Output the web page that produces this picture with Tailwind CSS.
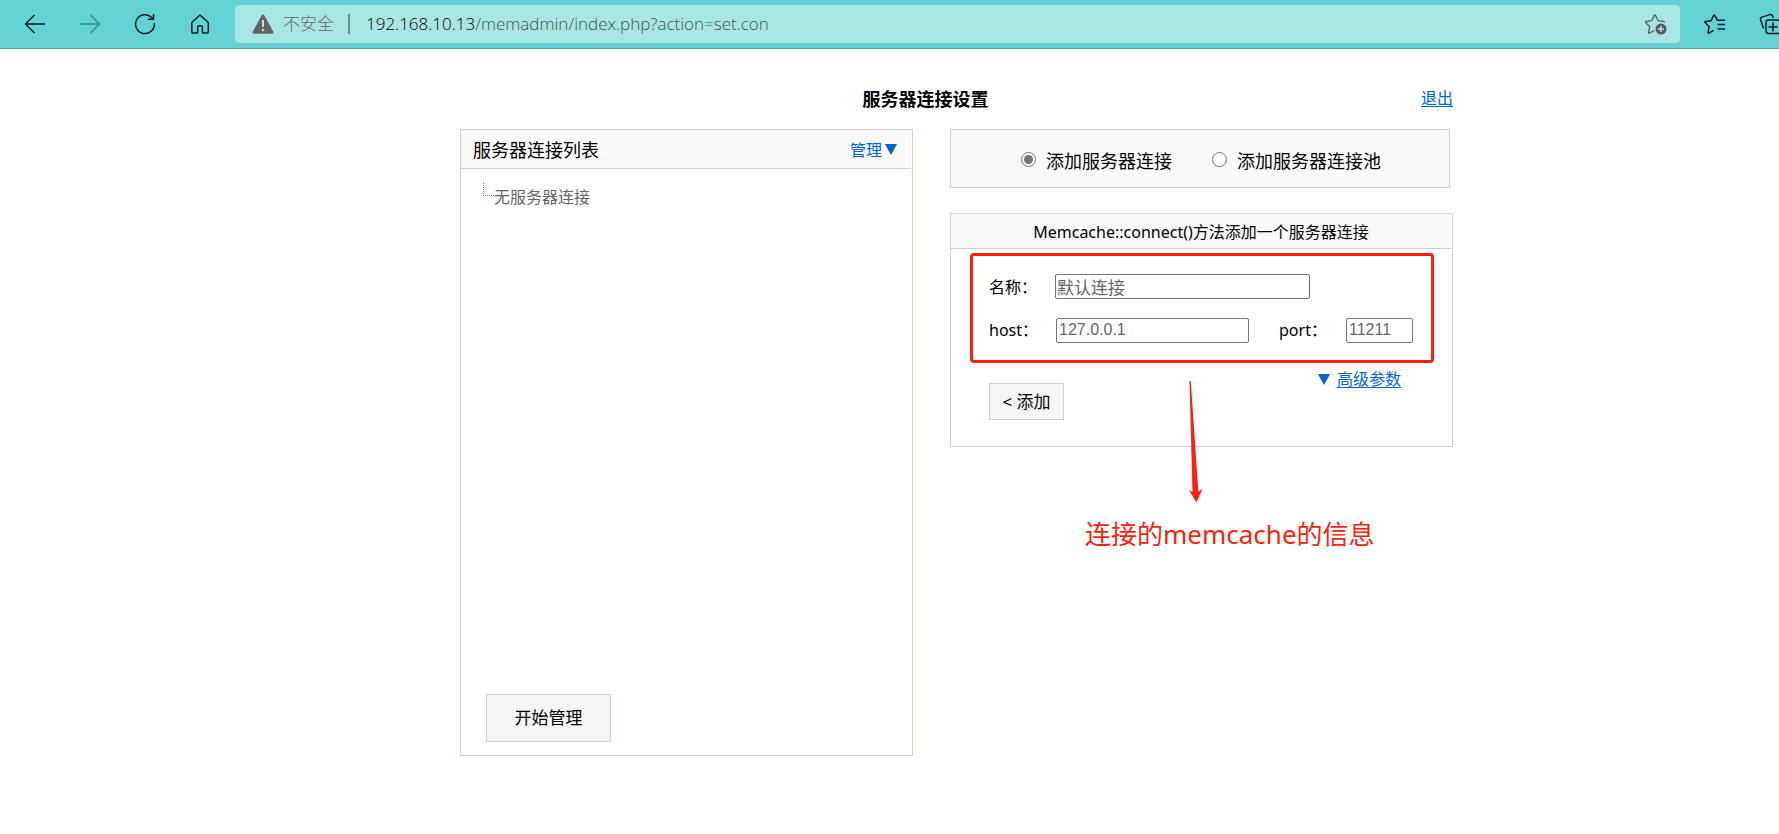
<!DOCTYPE html>
<html lang="zh-CN">
<head>
<meta charset="utf-8">
<meta name="viewport" content="width=device-width, initial-scale=1">
<title>服务器连接设置</title>
<script src="https://cdn.jsdelivr.net/npm/@tailwindcss/browser@4"></script>
</head>
<body class="bg-white text-black font-['Noto_Sans','Noto_Sans_CJK_SC',sans-serif] text-[16px] leading-6 overflow-x-hidden min-h-screen">

<!-- Browser toolbar -->
<header class="flex items-center h-[49px] pb-px bg-[#62d2d2] border-b border-[#4fa5a5] overflow-hidden">
  <nav class="flex shrink-0 items-center gap-[31px] pl-[23px]" aria-label="浏览器导航">
    <button class="size-6" aria-label="后退"><svg class="size-6" viewBox="0 0 24 24" fill="none" stroke="#0b1c1c" stroke-width="1.5"><path d="M22 12H2.500M11.500 3L2.500 12l9 9"/></svg></button>
    <button class="size-6" aria-label="前进"><svg class="size-6" viewBox="0 0 24 24" fill="none" stroke="#3f8a8a" stroke-width="1.5"><path d="M2 12h19.500M12.500 3l9 9-9 9"/></svg></button>
    <button class="size-6" aria-label="刷新"><svg class="size-6" viewBox="0 0 24 24" fill="none" stroke="#0b1c1c" stroke-width="1.500"><path d="M21.300 11a9.400 9.400 0 1 1-2.600-5.400l1.300 1.400M20.500 2v5.300h-5.600"/></svg></button>
    <button class="size-6" aria-label="主页"><svg class="size-6" viewBox="0 0 24 24" fill="none" stroke="#0b1c1c" stroke-width="1.500" stroke-linejoin="round"><path d="M3.800 10.500L12 3l8.300 7.500v9.200c0 .8-.5 1.300-1.300 1.300h-3.500c-.7 0-1.100-.4-1.100-1.100v-5c0-.8-.4-1.200-1.100-1.200h-2.500c-.7 0-1.100.4-1.100 1.200v5c0 .7-.4 1.100-1.100 1.100H5.100c-.8 0-1.300-.5-1.300-1.300z"/></svg></button>
  </nav>
  <div class="ml-[23px] flex h-[38px] min-w-0 flex-1 items-center rounded bg-[#a8e6e4] pl-4 pr-3">
    <button class="flex shrink-0 items-center text-[17px] font-light text-[#5f6b6b]">
      <svg class="mr-2 size-6" viewBox="0 0 24 24"><path d="M12 2.500c.6 0 1 .3 1.300.8l9 16.500c.5 1-.1 1.900-1.200 1.900H2.900c-1.100 0-1.700-.9-1.200-1.900l9-16.500c.3-.5.700-.8 1.300-.8z" fill="#646464"/><path d="M12 8v7" stroke="#b9e8e6" stroke-width="2"/><circle cx="12" cy="18" r="1.300" fill="#b9e8e6"/></svg>
      不安全
    </button>
    <span class="ml-[14px] mr-4 h-5 w-[2px] shrink-0 bg-[#5f8f8f]"></span>
    <div role="textbox" aria-label="地址栏" contenteditable="true" spellcheck="false" class="min-w-0 flex-1 whitespace-nowrap font-['Open_Sans',sans-serif] text-[17px] font-light text-[#405555]"><span class="text-black">192.168.10.13</span>/memadmin/index.php?action=set.con</div>
    <button class="size-6 shrink-0" aria-label="添加到收藏夹"><svg class="size-6" viewBox="0 0 24 24" fill="none"><path d="M10.500 18.500l-5 2.700c-.6.300-1-.1-.9-.7l1.100-5.800-4-4.100c-.5-.5-.3-1 .4-1.100l5.500-.8 2.700-5.300c.3-.6.8-.6 1.100 0l2.700 5.300 5.600.8c.6.100.8.5.6.9" stroke="#646464" stroke-width="1.400"/><circle cx="17" cy="17" r="5.500" fill="#5a5a5a"/><path d="M17 14v6M14 17h6" stroke="#b9e8e6" stroke-width="1.500"/></svg></button>
  </div>
  <div class="flex w-[99px] shrink-0 items-center gap-[31px] pl-[23px]">
    <button class="size-6 shrink-0" aria-label="收藏夹"><svg class="size-6" viewBox="0 0 24 24" fill="none" stroke="#0b1c1c" stroke-width="1.500"><path d="M10.500 18.500l-4.600 2.700c-.6.300-1-.1-.9-.7l1.100-5.800-4-4.100c-.5-.5-.3-1 .4-1.100l5.500-.8 2.700-5.300c.3-.6.8-.6 1.100 0L14.300 8.200h7.700M14.500 12.500H22M14.500 17H22"/></svg></button>
    <button class="size-6 shrink-0" aria-label="集锦"><svg class="size-6" viewBox="0 0 24 24" fill="none" stroke="#0b1c1c" stroke-width="1.500"><rect x="8" y="8" width="14" height="13.500" rx="2.500"/><path d="M15 10.500v9M10.500 15h9M5.500 16.500L2.600 7.800c-.4-1.300.1-2.300 1.300-2.700l8-2.500c1.300-.3 2.300.2 2.700 1.400l.6 1.700"/></svg></button>
  </div>
</header>

<div class="grid grid-cols-[460fr_minmax(0,993px)_326fr]">
<main class="col-start-2 pt-9">
  <div class="flex items-center">
    <h1 class="flex-1 text-center text-[18px] font-bold leading-7">服务器连接设置</h1>
    <a href="#logout" class="mb-0.5 ml-[30px] text-[#0066cc] underline underline-offset-2">退出</a>
  </div>

  <div class="mt-4 grid grid-cols-[453fr_503fr] items-start gap-[37px]">

    <!-- Connection list -->
    <section class="flex min-h-[627px] flex-col border border-[#d3d3c1]">
      <div class="mr-px flex h-[39px] items-center justify-between border-b border-[#d3d3c1] bg-[#fafafa] pl-3 pr-[14px] pt-px">
        <h2 class="text-[18px]">服务器连接列表</h2>
        <button class="flex items-center text-[#0066cc]">管理<svg class="ml-[3px] h-[11px] w-[12px]" viewBox="0 0 12 11"><path d="M0 0h12L6 11z" fill="#0066cc"/></svg></button>
      </div>
      <div class="flex items-start pl-[22px] pt-[14px] text-[#666666]">
        <span class="h-[13px] w-[11px] border-b border-l border-dotted border-[#808080]"></span>
        <span class="pt-0.5">无服务器连接</span>
      </div>
      <button class="mb-[13px] ml-[25px] mt-auto h-[48px] w-[125px] border border-[#d3d3c1] bg-[#f5f5f5] text-[17px]">开始管理</button>
    </section>

    <div>
      <!-- Connection type -->
      <div class="mr-[3px] flex h-[59px] items-center justify-center gap-10 border border-[#d3d3c1] bg-[#fafafa] pl-0.5 pt-1 text-[18px]">
        <label class="flex items-center gap-2.5"><input type="radio" name="type" checked class="mb-0.5 size-[15px] appearance-none rounded-full border border-[#767676] bg-white checked:bg-[#767676] checked:bg-clip-content p-[2px]">添加服务器连接</label>
        <label class="flex items-center gap-2.5"><input type="radio" name="type" class="mb-0.5 size-[15px] appearance-none rounded-full border border-[#767676] bg-white checked:bg-[#767676] checked:bg-clip-content p-[2px]">添加服务器连接池</label>
      </div>

      <!-- Connection form -->
      <form class="relative mt-[25px] border border-[#d3d3c1]">
        <h2 class="mr-px flex h-[35px] items-center justify-center border-b border-[#d3d3c1] bg-[#fafafa] pt-0.5">Memcache::connect()方法添加一个服务器连接</h2>
        <div class="pb-[26px] pl-[38px] pr-[39px] pt-[25px]">
          <div class="flex h-[25px] items-center">
            <label for="name" class="w-[66px]">名称：</label>
            <input id="name" value="默认连接" class="h-[25px] w-[255px] rounded-xs border border-[#767676] bg-white px-px text-[17px] text-[#666666]">
          </div>
          <div class="mt-[19px] flex h-[25px] items-center">
            <label for="host" class="w-[67px] pb-0.5">host：</label>
            <input id="host" value="127.0.0.1" class="h-[25px] w-[193px] rounded-xs border border-[#767676] bg-white px-0.5 pb-0.5 font-['Liberation_Sans',sans-serif] text-[16px] text-[#666666]">
            <label for="port" class="ml-[30px] w-[67px] pb-0.5">port：</label>
            <input id="port" value="11211" class="h-[25px] w-[67px] rounded-xs border border-[#767676] bg-white px-0.5 pb-0.5 font-['Liberation_Sans',sans-serif] text-[16px] text-[#666666]">
          </div>
          <div class="mt-6 flex items-start justify-between">
            <button type="button" class="mt-4 h-[37px] w-[75px] border border-[#d3d3c1] bg-[#f5f5f5] text-[17px]">&lt; 添加</button>
            <a href="#advanced" class="mr-[12px] flex items-center gap-[7px] text-[#0066cc]"><svg class="h-[11px] w-[12px]" viewBox="0 0 12 11"><path d="M0 0h12L6 11z" fill="#0066cc"/></svg><span class="underline underline-offset-2">高级参数</span></a>
          </div>
        </div>

        <!-- Annotation overlay -->
        <div class="pointer-events-none absolute left-[19px] right-[18px] top-[39px] h-[110px] rounded border-3 border-[#ff1e10]"></div>
        <svg class="pointer-events-none absolute left-[238px] top-[167px] h-[122px] w-[14px]" viewBox="0 0 14 122" fill="#ff1e10"><path d="M.5 0h1.300L9.300 110.500l4-2.500L7.500 121.500 0 109l3.500 2z"/></svg>
        <p class="pointer-events-none absolute left-[134px] top-[302px] whitespace-nowrap text-[26px] leading-9 text-[#ff1e10]">连接的memcache的信息</p>
      </form>
    </div>
  </div>
</main>
</div>
</body>
</html>
